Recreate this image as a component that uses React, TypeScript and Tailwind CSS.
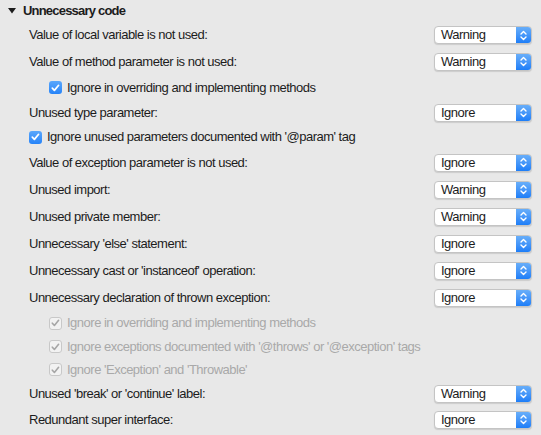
import React from 'react';

type Row =
  | { kind: 'select'; label: string; value: string; h: string }
  | { kind: 'check'; label: string; indent: string; disabled?: boolean; h: string };

const rows: Row[] = [
  { kind: 'select', label: 'Value of local variable is not used:', value: 'Warning', h: 'h-[26px]' },
  { kind: 'select', label: 'Value of method parameter is not used:', value: 'Warning', h: 'h-[27px]' },
  { kind: 'check', label: 'Ignore in overriding and implementing methods', indent: 'pl-[49px]', h: 'h-[25px]' },
  { kind: 'select', label: 'Unused type parameter:', value: 'Ignore', h: 'h-[25px]' },
  { kind: 'check', label: "Ignore unused parameters documented with '@param' tag", indent: 'pl-[29px]', h: 'h-[24px]' },
  { kind: 'select', label: 'Value of exception parameter is not used:', value: 'Ignore', h: 'h-[27px]' },
  { kind: 'select', label: 'Unused import:', value: 'Warning', h: 'h-[27px]' },
  { kind: 'select', label: 'Unused private member:', value: 'Warning', h: 'h-[27px]' },
  { kind: 'select', label: "Unnecessary 'else' statement:", value: 'Ignore', h: 'h-[27px]' },
  { kind: 'select', label: "Unnecessary cast or 'instanceof' operation:", value: 'Ignore', h: 'h-[27px]' },
  { kind: 'select', label: 'Unnecessary declaration of thrown exception:', value: 'Ignore', h: 'h-[27px]' },
  { kind: 'check', label: 'Ignore in overriding and implementing methods', indent: 'pl-[49px]', disabled: true, h: 'h-[24px]' },
  { kind: 'check', label: "Ignore exceptions documented with '@throws' or '@exception' tags", indent: 'pl-[49px]', disabled: true, h: 'h-[23px]' },
  { kind: 'check', label: "Ignore 'Exception' and 'Throwable'", indent: 'pl-[49px]', disabled: true, h: 'h-[23px]' },
  { kind: 'select', label: "Unused 'break' or 'continue' label:", value: 'Warning', h: 'h-[25px]' },
  { kind: 'select', label: 'Redundant super interface:', value: 'Ignore', h: 'h-[27px]' },
];

const Select: React.FC<{ value: string }> = ({ value }) => (
  <div className="flex h-[18px] w-[98px] overflow-hidden rounded-[4px] border border-[#c4c4c4] bg-white shadow-[0_1px_1px_rgba(0,0,0,0.12)]">
    <div className="flex flex-1 items-center pl-[6px] text-[13px] text-[#1c1c1c]">{value}</div>
    <div className="flex w-[15px] items-center justify-center bg-gradient-to-b from-[#68aef9] to-[#1c7ef8]">
      <svg width="7" height="11" viewBox="0 0 7 11" fill="none" stroke="white" strokeWidth="1.4" strokeLinecap="round" strokeLinejoin="round">
        <path d="M1 4 L3.5 1.5 L6 4" />
        <path d="M1 7 L3.5 9.5 L6 7" />
      </svg>
    </div>
  </div>
);

const Check: React.FC<{ disabled?: boolean }> = ({ disabled }) =>
  disabled ? (
    <div className="flex h-[13px] w-[13px] items-center justify-center rounded-[3px] border border-[#c8c8c8] bg-[#f2f2f2]">
      <svg width="9" height="8" viewBox="0 0 9 8" fill="none" stroke="#a6a6a6" strokeWidth="1.6" strokeLinecap="round" strokeLinejoin="round">
        <path d="M1.3 4.2 L3.4 6.4 L7.6 1.3" />
      </svg>
    </div>
  ) : (
    <div className="flex h-[13px] w-[13px] items-center justify-center rounded-[3px] bg-gradient-to-b from-[#5aa7fb] to-[#2583f8]">
      <svg width="9" height="8" viewBox="0 0 9 8" fill="none" stroke="white" strokeWidth="1.7" strokeLinecap="round" strokeLinejoin="round">
        <path d="M1.3 4.2 L3.4 6.4 L7.6 1.3" />
      </svg>
    </div>
  );

export default function App() {
  return (
    <div
      className="h-[435px] w-[541px] overflow-hidden bg-[#e8e8e8] text-[13px] tracking-[-0.5px] text-[#1c1c1c]"
      style={{ fontFamily: '"Liberation Sans", Arial, sans-serif' }}
    >
      <div className="flex h-[22px] items-center pl-[8px]">
        <svg width="8" height="6" viewBox="0 0 8 6" className="mr-[7px]">
          <path d="M0 0 L8 0 L4 5.5 Z" fill="#1c1c1c" />
        </svg>
        <span className="font-bold tracking-[-0.8px]">Unnecessary code</span>
      </div>
      {rows.map((r, i) =>
        r.kind === 'select' ? (
          <div key={i} className={`flex items-center justify-between pl-[29px] pr-[9px] ${r.h}`}>
            <span>{r.label}</span>
            <Select value={r.value} />
          </div>
        ) : (
          <div key={i} className={`flex items-center gap-[5px] ${r.indent} ${r.h}`}>
            <Check disabled={r.disabled} />
            <span className={r.disabled ? 'text-[#a9a9a9]' : ''}>{r.label}</span>
          </div>
        )
      )}
    </div>
  );
}
